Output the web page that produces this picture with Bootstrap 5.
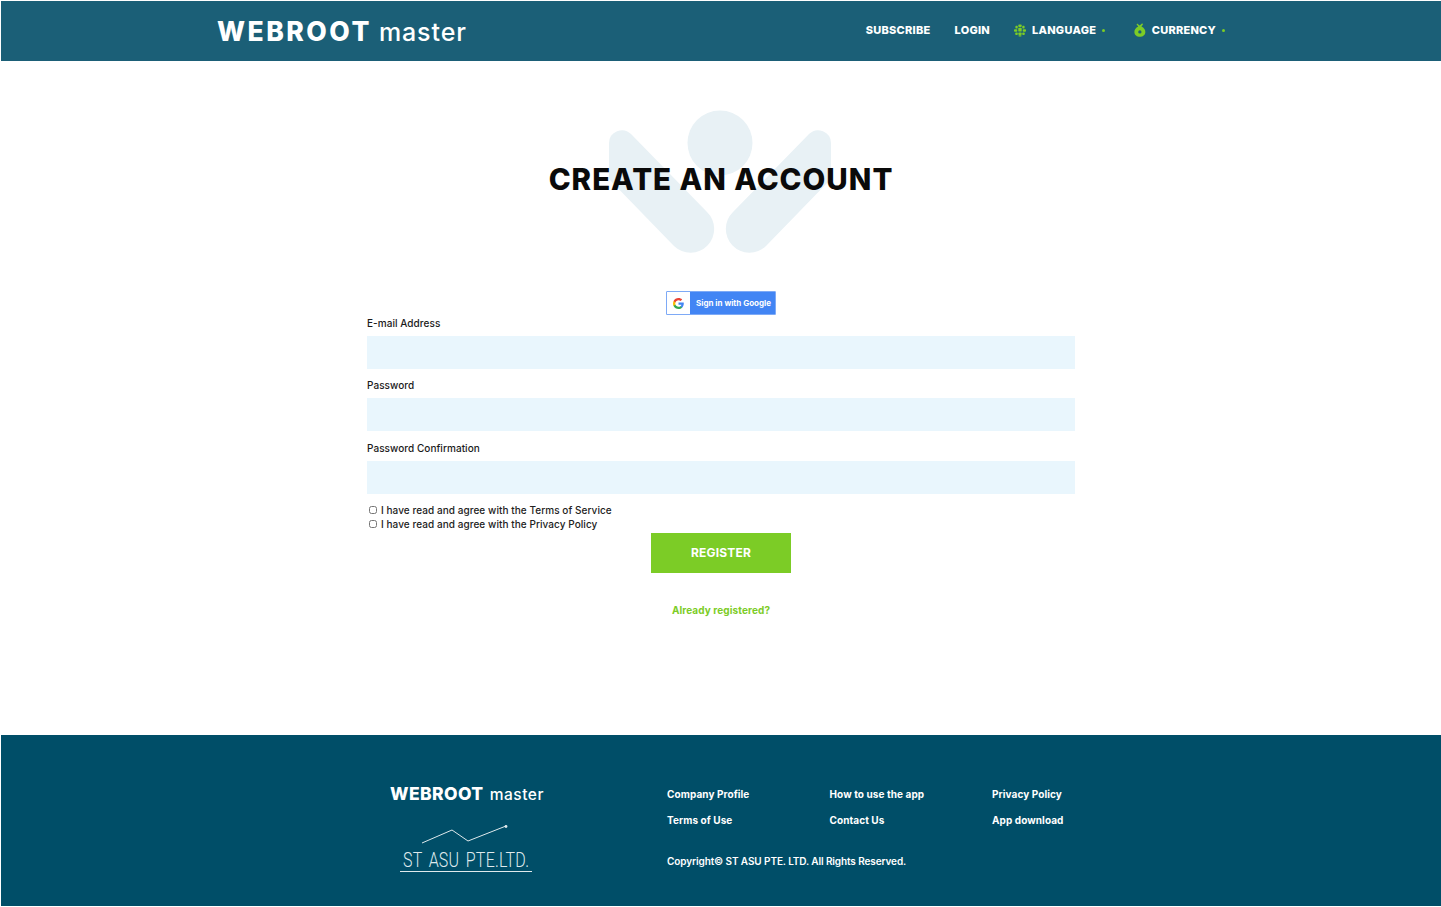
<!DOCTYPE html>
<html lang="en">
<head>
<meta charset="utf-8">
<title>Create an account</title>
<link href="https://cdn.jsdelivr.net/npm/bootstrap@5.3.0/dist/css/bootstrap.min.css" rel="stylesheet">
<style>
html,body{height:100%}
body{font-family:"Inter","Liberation Sans",sans-serif;background:#fff;padding:1px 0 0 1px;min-height:906px;color:#111}
.wr-page{height:905px}
.wr-top{height:60px;background:#1b5f77;padding:0 216px;flex:none}
.wr-brand{color:#fff;text-decoration:none;font-size:26.5px;font-weight:800;letter-spacing:2.5px;line-height:1;white-space:nowrap}
.wr-brand span{font-weight:500;font-size:25px;letter-spacing:.9px;margin-left:7px}
.wr-navitems{gap:24px;color:#fff;font-size:11px;font-weight:800;letter-spacing:.25px;padding-bottom:2px}
.wr-navitems a{color:#fff;text-decoration:none}
.wr-navitem{gap:6px}
.wr-lang{width:96px}
.wr-curr{width:91px}
.wr-dot{width:3px;height:3px;border-radius:50%;background:#7ccc26;display:inline-block}
.wr-main{flex:1 1 auto;padding-top:49px}
.wr-stack{display:grid;justify-items:center;align-items:center;height:144px}
.wr-stack>*{grid-area:1/1}
.wr-title{font-size:29.5px;font-weight:800;color:#0a0a0a;margin:0;letter-spacing:1px;line-height:1;padding-bottom:4px}
.wr-form{width:708px;margin:37px auto 0}
.wr-google{width:110px;height:24px;background:#4285f4;border:1px solid #7eaaf6;color:#fff;font-size:8px;font-weight:700;text-decoration:none;border-radius:1px}
.wr-g{width:23px;height:22px;background:#fff}
.wr-gtext{margin-left:6px}
.wr-label{font-size:10px;font-weight:500;color:#1a1a1a;line-height:13px;margin:0 0 6px;display:block;letter-spacing:.05px}
.wr-label-first{margin-top:2px}
.wr-input{height:33px;background:#e9f6fd;border:0;border-radius:0;padding:0 10px;width:100%;display:block;margin-bottom:10.4px}
.wr-checks{margin-top:-1px}
.wr-check{display:flex;align-items:center;height:14px;font-size:10px;font-weight:500;color:#222;letter-spacing:.06px;gap:4px;margin:0}
.wr-check input{width:8px;height:8px;margin:0 0 0 2px;flex:none;accent-color:#777}
.wr-register{display:block;width:140px;height:40px;background:#7ccc26;color:#fff;border:0;border-radius:0;font-size:12px;letter-spacing:.2px;font-weight:700;margin:2px auto 0;padding:0}
.wr-already{display:block;text-align:center;color:#7ccc26;font-size:10px;font-weight:700;text-decoration:none;margin-top:31px;line-height:13px;letter-spacing:.1px}
.wr-foot{height:171px;background:#004e68;flex:none;padding:50px 0 0 389px;color:#fff}
.wr-fbrand{width:277px;flex:none}
.wr-fname{font-size:17.5px;font-weight:800;line-height:18px;white-space:nowrap;letter-spacing:.4px}
.wr-fname span{font-weight:500;font-size:15.5px;letter-spacing:.5px;margin-left:2px}
.wr-flinks{display:grid;grid-template-columns:162.5px 162.5px 100px;grid-auto-rows:26px;font-size:10px;font-weight:700;letter-spacing:.08px;line-height:18px}
.wr-flinks a{color:#fff;text-decoration:none;white-space:nowrap}
.wr-copy{font-size:10px;font-weight:600;margin-top:16px;line-height:16px;letter-spacing:-.1px}
.wr-stasu{display:block;margin-top:21px;margin-left:10px}
.wr-stasu text{font-family:"Roboto",sans-serif;font-weight:300;font-size:20.500px;fill:#dfe9ec;word-spacing:3px;letter-spacing:.3px}
</style>
</head>
<body>
<div class="wr-page d-flex flex-column">
<header class="wr-top d-flex align-items-center justify-content-between">
  <a class="wr-brand" href="#">WEBROOT<span>master</span></a>
  <nav class="wr-navitems d-flex align-items-center">
    <a href="#">SUBSCRIBE</a>
    <a href="#">LOGIN</a>
    <a href="#" class="wr-navitem wr-lang d-flex align-items-center">
      <svg width="12" height="13" viewBox="0 0 14 14" fill="#7ccc26"><rect x="5" y="0" width="4" height="2.800" rx="1"/><rect x="1.600" y="1.600" width="2.800" height="3" rx="1"/><rect x="9.600" y="1.600" width="2.800" height="3" rx="1"/><rect x="0" y="5.400" width="3.800" height="3" rx="1"/><rect x="5" y="3.800" width="4" height="4.400" rx="1"/><rect x="10.200" y="5.400" width="3.800" height="3" rx="1"/><rect x="1.400" y="9.200" width="3" height="3" rx="1"/><rect x="5" y="9.200" width="4" height="3" rx="1"/><rect x="9.600" y="9.200" width="3" height="3" rx="1"/><rect x="5.200" y="12.400" width="3.600" height="1.600" rx=".8"/></svg>
      <span>LANGUAGE</span><i class="wr-dot"></i>
    </a>
    <a href="#" class="wr-navitem wr-curr d-flex align-items-center">
      <svg width="12" height="14" viewBox="0 0 12 14"><path fill="#7ccc26" d="M3.200.4 5.800 2.400 8.400.2 9.200 1.400 7.600 3.400C10.200 4.600 11.800 6.800 11.600 9.200 11.400 12 9 14 6 14S.6 12 .4 9.200C.2 6.800 1.800 4.600 4.400 3.400L2.600 1.400z"/><circle cx="6" cy="9" r="1.700" fill="#1b5f77"/></svg>
      <span>CURRENCY</span><i class="wr-dot"></i>
    </a>
  </nav>
</header>
<main class="wr-main">
  <div class="wr-stack">
    <svg width="224" height="144" viewBox="610 109 224 144" fill="#e8f1f5"><circle cx="721" cy="142" r="32.500"/><path d="M610 142a13 13 0 0 1 22-9l76 78a23.500 23.500 0 0 1-33 34l-65-67z"/><path d="M832 142a13 13 0 0 0-22-9l-76 78a23.500 23.500 0 0 0 33 34l65-67z"/></svg>
    <h1 class="wr-title">CREATE AN ACCOUNT</h1>
  </div>
  <form class="wr-form">
    <div class="d-flex justify-content-center">
      <a class="wr-google d-flex align-items-center" href="#">
        <span class="wr-g d-flex align-items-center justify-content-center"><svg width="11" height="11" viewBox="0 0 18 18"><path fill="#4285F4" d="M17.64 9.2c0-.637-.057-1.251-.164-1.84H9v3.481h4.844c-.209 1.125-.843 2.078-1.796 2.717v2.258h2.908c1.702-1.567 2.684-3.874 2.684-6.615z"/><path fill="#34A853" d="M9 18c2.430 0 4.467-.806 5.956-2.180l-2.908-2.259c-.806.54-1.837.86-3.048.86-2.344 0-4.328-1.584-5.036-3.711H.957v2.332C2.438 15.983 5.482 18 9 18z"/><path fill="#FBBC05" d="M3.964 10.710c-.18-.54-.282-1.117-.282-1.710s.102-1.170.282-1.710V4.958H.957C.347 6.173 0 7.548 0 9s.348 2.827.957 4.042l3.007-2.332z"/><path fill="#EA4335" d="M9 3.580c1.321 0 2.508.454 3.440 1.345l2.582-2.580C13.463.891 11.426 0 9 0 5.482 0 2.438 2.017.957 4.958L3.964 7.290C4.672 5.163 6.656 3.580 9 3.580z"/></svg></span>
        <span class="wr-gtext text-nowrap">Sign in with Google</span>
      </a>
    </div>
    <label class="wr-label wr-label-first" for="wr-email">E-mail Address</label>
    <input class="wr-input" id="wr-email" type="email">
    <label class="wr-label" for="wr-pass">Password</label>
    <input class="wr-input" id="wr-pass" type="password">
    <label class="wr-label" for="wr-conf">Password Confirmation</label>
    <input class="wr-input" id="wr-conf" type="password">
    <div class="wr-checks">
      <label class="wr-check"><input type="checkbox">I have read and agree with the Terms of Service</label>
      <label class="wr-check"><input type="checkbox">I have read and agree with the Privacy Policy</label>
    </div>
    <button class="wr-register" type="button">REGISTER</button>
    <a class="wr-already" href="#">Already registered?</a>
  </form>
</main>
<footer class="wr-foot d-flex">
  <div class="wr-fbrand">
    <div class="wr-fname">WEBROOT <span>master</span></div>
    <svg class="wr-stasu" width="134" height="48" viewBox="0 0 134 48"><polyline points="22,18 52,5 68,16 106,1" fill="none" stroke="#dfe9ec" stroke-width="1"/><circle cx="106" cy="1.500" r="1.400" fill="#dfe9ec"/><text transform="translate(3 42) scale(.78 1)">ST ASU PTE.LTD.</text><rect x="0" y="46" width="132" height="1" fill="#dfe9ec"/></svg>
  </div>
  <div>
    <div class="wr-flinks">
      <a href="#">Company Profile</a><a href="#">How to use the app</a><a href="#">Privacy Policy</a>
      <a href="#">Terms of Use</a><a href="#">Contact Us</a><a href="#">App download</a>
    </div>
    <div class="wr-copy">Copyright© ST ASU PTE. LTD. All Rights Reserved.</div>
  </div>
</footer>
</div>
</body>
</html>
